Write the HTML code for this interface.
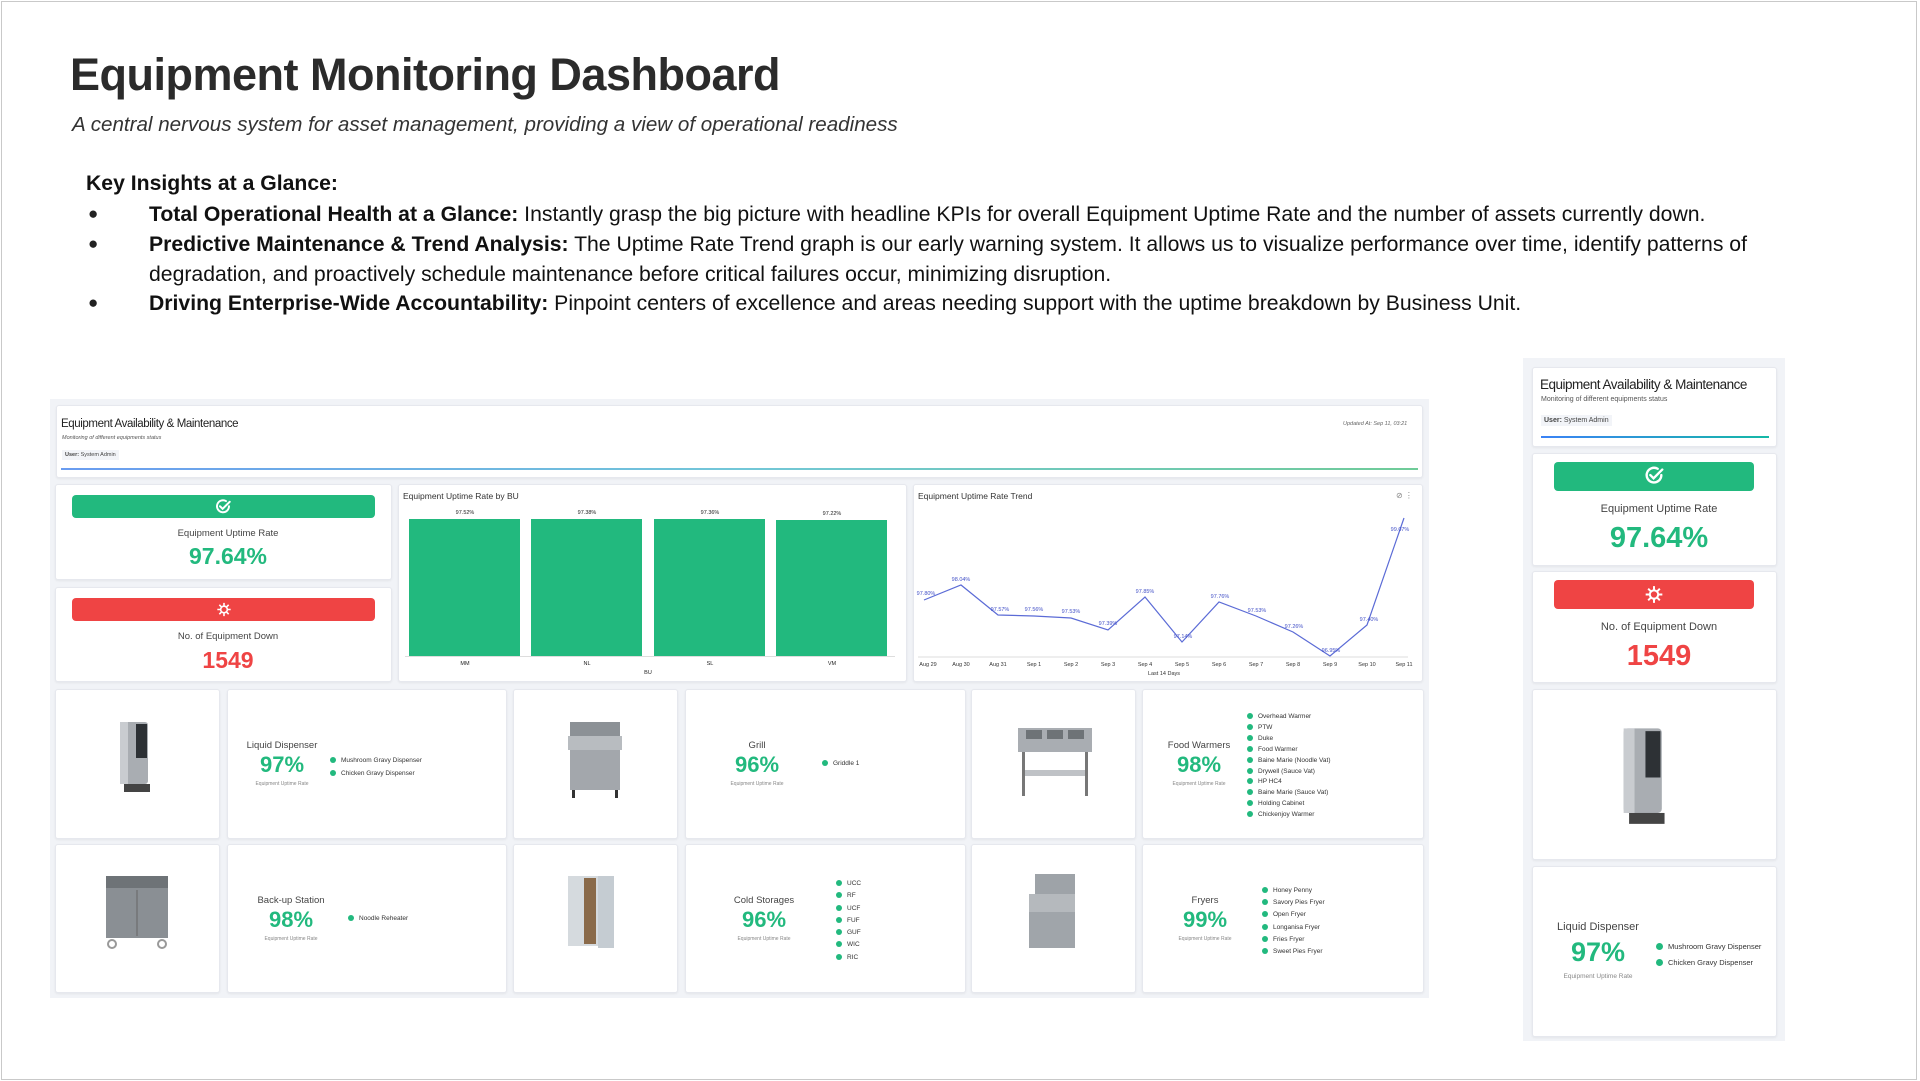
<!DOCTYPE html>
<html><head><meta charset="utf-8"><style>
*{margin:0;padding:0;box-sizing:border-box}
body{width:1920px;height:1081px;background:#fff;font-family:"Liberation Sans",Arial,sans-serif;position:relative;overflow:hidden;color:#222}
.a{position:absolute}
.frame{left:1px;top:1px;width:1916px;height:1079px;border:1px solid #c9c9c9}
h1{position:absolute;left:70px;top:49px;font-size:45px;font-weight:bold;color:#2b2b2b;letter-spacing:-0.5px}
.sub{left:72px;top:113px;font-size:20.6px;font-style:italic;color:#333}
.ki{left:86px;top:172px;font-size:21.2px;font-weight:bold;color:#111}
.bl{left:149px;font-size:21.2px;color:#111;line-height:29.5px;width:1620px}
.dot{left:88px;font-size:17px}
.card{position:absolute;background:#fff;border:1px solid #e6e8ee;border-radius:3px;box-shadow:0 1px 2px rgba(0,0,0,.06)}
.bg{position:absolute;background:#f1f3f7}
.t{position:absolute;white-space:nowrap}
.bar{position:absolute;border-radius:4px}
.c{text-align:center;transform:translateX(-50%)}
.g{color:#22b97e;font-weight:bold}
.r{color:#ef4444;font-weight:bold}
.lg{position:absolute;font-size:6.5px;color:#333;white-space:nowrap}
.lg i{display:inline-block;width:6px;height:6px;border-radius:50%;background:#22b97e;margin-right:5px;vertical-align:-1px}
.gb{position:absolute;background:#22b97e}
</style></head><body>
<div class="a frame"></div>
<h1>Equipment Monitoring Dashboard</h1>
<div class="a sub">A central nervous system for asset management, providing a view of operational readiness</div>
<div class="a ki">Key Insights at a Glance:</div>
<div class="a dot" style="top:204px">●</div>
<div class="a dot" style="top:234px">●</div>
<div class="a dot" style="top:293px">●</div>
<div class="a bl" style="top:200px"><b>Total Operational Health at a Glance:</b> Instantly grasp the big picture with headline KPIs for overall Equipment Uptime Rate and the number of assets currently down.</div>
<div class="a bl" style="top:230px"><b>Predictive Maintenance &amp; Trend Analysis:</b> The Uptime Rate Trend graph is our early warning system. It allows us to visualize performance over time, identify patterns of degradation, and proactively schedule maintenance before critical failures occur, minimizing disruption.</div>
<div class="a bl" style="top:289px"><b>Driving Enterprise-Wide Accountability:</b> Pinpoint centers of excellence and areas needing support with the uptime breakdown by Business Unit.</div>

<!-- main dashboard -->
<div class="bg" style="left:50px;top:399px;width:1379px;height:599px"></div>
<div class="card" style="left:56px;top:405px;width:1367px;height:73px"></div>
<div class="t" style="left:61px;top:418px;font-size:11.5px;color:#222;letter-spacing:-0.4px">Equipment Availability &amp; Maintenance</div>
<div class="t" style="left:62px;top:435px;font-size:5.5px;color:#555;font-style:italic">Monitoring of different equipments status</div>
<div class="t" style="left:62px;top:450px;font-size:5.5px;color:#444;background:#f2f4f8;padding:2px 3px"><b>User:</b> System Admin</div>
<div class="t" style="left:1343px;top:421px;font-size:5.5px;color:#666;font-style:italic">Updated At: Sep 11, 03:21</div>
<div class="a" style="left:61px;top:468px;width:1357px;height:2px;background:linear-gradient(90deg,#6a9cf0,#72c7d8 50%,#6fcb98)"></div>

<div class="card" style="left:55px;top:484px;width:337px;height:96px"></div>
<div class="bar" style="left:72px;top:495px;width:303px;height:23px;background:#22b97e"></div>
<svg class="a" style="left:214px;top:498px" width="18" height="18" viewBox="0 0 24 24" fill="none" stroke="#fff" stroke-width="2.6" stroke-linecap="round"><path d="M20 11a8 8 0 1 1-4-6.9"/><path d="M8 11l3.5 3.5L21 5"/></svg>
<div class="t c" style="left:228px;top:528px;font-size:9.5px;color:#444">Equipment Uptime Rate</div>
<div class="t c g" style="left:228px;top:543px;font-size:23px">97.64%</div>
<div class="card" style="left:55px;top:587px;width:337px;height:95px"></div>
<div class="bar" style="left:72px;top:598px;width:303px;height:23px;background:#ef4444"></div>
<svg class="a" style="left:216px;top:601px" width="16" height="17" viewBox="0 0 24 24" fill="none" stroke="#fff" stroke-width="2.4"><circle cx="12" cy="12" r="5"/><path d="M12 2v4M12 18v4M2 12h4M18 12h4M5 5l3 3M16 16l3 3M19 5l-3 3M8 16l-3 3"/></svg>
<div class="t c" style="left:228px;top:631px;font-size:9.5px;color:#444">No. of Equipment Down</div>
<div class="t c r" style="left:228px;top:647px;font-size:23px">1549</div>

<div class="card" style="left:398px;top:484px;width:509px;height:198px"></div>
<div class="t" style="left:403px;top:491px;font-size:8.5px;color:#333">Equipment Uptime Rate by BU</div>
<div class="gb" style="left:409px;top:519px;width:111px;height:137px"></div>
<div class="gb" style="left:531px;top:519px;width:111px;height:137px"></div>
<div class="gb" style="left:654px;top:519px;width:111px;height:137px"></div>
<div class="gb" style="left:776px;top:520px;width:111px;height:136px"></div>
<div class="a" style="left:405px;top:656px;width:490px;height:1px;background:#ddd"></div>
<div class="t c" style="left:465px;top:510px;font-size:5.5px">97.52%</div>
<div class="t c" style="left:587px;top:510px;font-size:5.5px">97.38%</div>
<div class="t c" style="left:710px;top:510px;font-size:5.5px">97.36%</div>
<div class="t c" style="left:832px;top:511px;font-size:5.5px">97.22%</div>
<div class="t c" style="left:465px;top:661px;font-size:5.5px">MM</div>
<div class="t c" style="left:587px;top:661px;font-size:5.5px">NL</div>
<div class="t c" style="left:710px;top:661px;font-size:5.5px">SL</div>
<div class="t c" style="left:832px;top:661px;font-size:5.5px">VM</div>
<div class="t c" style="left:648px;top:670px;font-size:5.5px">BU</div>

<div class="card" style="left:913px;top:484px;width:510px;height:198px"></div>
<div class="t" style="left:918px;top:491px;font-size:8.5px;color:#333">Equipment Uptime Rate Trend</div>
<div class="t" style="left:1396px;top:491px;font-size:8px;color:#888">⊘ ⋮</div>
<svg class="a" style="left:900px;top:500px" width="520" height="180">
<line x1="18" y1="157" x2="508" y2="157" stroke="#ddd"/>
<polyline fill="none" stroke="#5b6bd6" stroke-width="1.2" points="24,100 61,85 98,115 134,116 171,118 208,130 245,97 282,142 319,102 356,116 393,132 430,156 467,125 504,18"/>
<g font-size="5.5" fill="#4351c7" font-family="Liberation Sans" text-anchor="middle">
<text x="26" y="95">97.80%</text><text x="61" y="81">98.04%</text><text x="100" y="111">97.57%</text><text x="134" y="111">97.56%</text><text x="171" y="113">97.53%</text><text x="208" y="125">97.39%</text><text x="245" y="93">97.85%</text><text x="283" y="138">97.14%</text><text x="320" y="98">97.76%</text><text x="357" y="112">97.53%</text><text x="394" y="128">97.26%</text><text x="431" y="152">96.95%</text><text x="469" y="121">97.40%</text><text x="500" y="31">99.07%</text></g>
<g font-size="5.5" fill="#333" font-family="Liberation Sans" text-anchor="middle">
<text x="28" y="166">Aug 29</text><text x="61" y="166">Aug 30</text><text x="98" y="166">Aug 31</text><text x="134" y="166">Sep 1</text><text x="171" y="166">Sep 2</text><text x="208" y="166">Sep 3</text><text x="245" y="166">Sep 4</text><text x="282" y="166">Sep 5</text><text x="319" y="166">Sep 6</text><text x="356" y="166">Sep 7</text><text x="393" y="166">Sep 8</text><text x="430" y="166">Sep 9</text><text x="467" y="166">Sep 10</text><text x="504" y="166">Sep 11</text><text x="264" y="175">Last 14 Days</text></g>
</svg>

<!-- equipment cards -->
<div class="card" style="left:55px;top:689px;width:165px;height:150px"></div>
<div class="card" style="left:227px;top:689px;width:280px;height:150px"></div>
<div class="card" style="left:513px;top:689px;width:165px;height:150px"></div>
<div class="card" style="left:685px;top:689px;width:281px;height:150px"></div>
<div class="card" style="left:971px;top:689px;width:165px;height:150px"></div>
<div class="card" style="left:1142px;top:689px;width:282px;height:150px"></div>
<div class="card" style="left:55px;top:844px;width:165px;height:149px"></div>
<div class="card" style="left:227px;top:844px;width:280px;height:149px"></div>
<div class="card" style="left:513px;top:844px;width:165px;height:149px"></div>
<div class="card" style="left:685px;top:844px;width:281px;height:149px"></div>
<div class="card" style="left:971px;top:844px;width:165px;height:149px"></div>
<div class="card" style="left:1142px;top:844px;width:282px;height:149px"></div>

<!-- appliance drawings -->
<svg class="a" style="left:110px;top:718px" width="55" height="80" viewBox="0 0 55 80"><rect x="10" y="4" width="28" height="62" rx="3" fill="#a9adb2"/><rect x="26" y="6" width="11" height="34" fill="#2d3135"/><rect x="14" y="66" width="26" height="8" fill="#444"/><rect x="10" y="4" width="8" height="62" fill="#c9ccd0"/></svg>
<svg class="a" style="left:560px;top:718px" width="70" height="82" viewBox="0 0 70 82"><rect x="10" y="4" width="50" height="14" fill="#8c9196"/><rect x="8" y="18" width="54" height="14" fill="#b8bcc0"/><rect x="10" y="32" width="50" height="40" fill="#a3a7ac"/><rect x="12" y="72" width="3" height="8" fill="#333"/><rect x="55" y="72" width="3" height="8" fill="#333"/></svg>
<svg class="a" style="left:1010px;top:718px" width="90" height="80" viewBox="0 0 90 80"><rect x="8" y="10" width="74" height="24" fill="#a9adb2"/><rect x="16" y="12" width="16" height="9" fill="#6e7377"/><rect x="37" y="12" width="16" height="9" fill="#6e7377"/><rect x="58" y="12" width="16" height="9" fill="#6e7377"/><rect x="12" y="52" width="66" height="6" fill="#bfc2c6"/><rect x="12" y="34" width="3" height="44" fill="#777"/><rect x="75" y="34" width="3" height="44" fill="#777"/></svg>
<svg class="a" style="left:100px;top:870px" width="75" height="80" viewBox="0 0 75 80"><rect x="6" y="6" width="62" height="12" fill="#6e7377"/><rect x="6" y="18" width="62" height="50" fill="#8a8f94"/><line x1="37" y1="20" x2="37" y2="66" stroke="#666"/><circle cx="12" cy="74" r="4" fill="none" stroke="#999" stroke-width="2"/><circle cx="62" cy="74" r="4" fill="none" stroke="#999" stroke-width="2"/></svg>
<svg class="a" style="left:560px;top:872px" width="70" height="80" viewBox="0 0 70 80"><rect x="8" y="4" width="30" height="70" fill="#d5dade"/><rect x="24" y="6" width="12" height="66" fill="#8a6a4a"/><rect x="38" y="4" width="16" height="72" fill="#c5ccd2"/></svg>
<svg class="a" style="left:1015px;top:870px" width="75" height="82" viewBox="0 0 75 82"><rect x="20" y="4" width="40" height="24" fill="#9ea3a8"/><rect x="14" y="24" width="46" height="18" fill="#b5b9bd"/><rect x="14" y="42" width="46" height="36" fill="#a0a5aa"/></svg>

<!-- text blocks -->
<div class="t c" style="left:282px;top:740px;font-size:9.5px;color:#444">Liquid Dispenser</div>
<div class="t c g" style="left:282px;top:752px;font-size:22px">97%</div>
<div class="t c" style="left:282px;top:781px;font-size:5px;color:#888">Equipment Uptime Rate</div>
<div class="lg" style="left:330px;top:754px;line-height:13px"><i></i>Mushroom Gravy Dispenser<br><i></i>Chicken Gravy Dispenser</div>

<div class="t c" style="left:757px;top:740px;font-size:9.5px;color:#444">Grill</div>
<div class="t c g" style="left:757px;top:752px;font-size:22px">96%</div>
<div class="t c" style="left:757px;top:781px;font-size:5px;color:#888">Equipment Uptime Rate</div>
<div class="lg" style="left:822px;top:760px"><i></i>Griddle 1</div>

<div class="t c" style="left:1199px;top:740px;font-size:9.5px;color:#444">Food Warmers</div>
<div class="t c g" style="left:1199px;top:752px;font-size:22px">98%</div>
<div class="t c" style="left:1199px;top:781px;font-size:5px;color:#888">Equipment Uptime Rate</div>
<div class="lg" style="left:1247px;top:712px;line-height:10.9px"><i></i>Overhead Warmer<br><i></i>PTW<br><i></i>Duke<br><i></i>Food Warmer<br><i></i>Baine Marie (Noodle Vat)<br><i></i>Drywell (Sauce Vat)<br><i></i>HP HC4<br><i></i>Baine Marie (Sauce Vat)<br><i></i>Holding Cabinet<br><i></i>Chickenjoy Warmer</div>

<div class="t c" style="left:291px;top:895px;font-size:9.5px;color:#444">Back-up Station</div>
<div class="t c g" style="left:291px;top:907px;font-size:22px">98%</div>
<div class="t c" style="left:291px;top:936px;font-size:5px;color:#888">Equipment Uptime Rate</div>
<div class="lg" style="left:348px;top:915px"><i></i>Noodle Reheater</div>

<div class="t c" style="left:764px;top:895px;font-size:9.5px;color:#444">Cold Storages</div>
<div class="t c g" style="left:764px;top:907px;font-size:22px">96%</div>
<div class="t c" style="left:764px;top:936px;font-size:5px;color:#888">Equipment Uptime Rate</div>
<div class="lg" style="left:836px;top:878px;line-height:12.3px"><i></i>UCC<br><i></i>RF<br><i></i>UCF<br><i></i>FUF<br><i></i>GUF<br><i></i>WIC<br><i></i>RIC</div>

<div class="t c" style="left:1205px;top:895px;font-size:9.5px;color:#444">Fryers</div>
<div class="t c g" style="left:1205px;top:907px;font-size:22px">99%</div>
<div class="t c" style="left:1205px;top:936px;font-size:5px;color:#888">Equipment Uptime Rate</div>
<div class="lg" style="left:1262px;top:885px;line-height:12.2px"><i></i>Honey Penny<br><i></i>Savory Pies Fryer<br><i></i>Open Fryer<br><i></i>Longanisa Fryer<br><i></i>Fries Fryer<br><i></i>Sweet Pies Fryer</div>

<!-- right panel -->
<div class="bg" style="left:1523px;top:358px;width:262px;height:683px"></div>
<div class="card" style="left:1532px;top:367px;width:245px;height:80px"></div>
<div class="t" style="left:1540px;top:377px;font-size:13.5px;color:#222;letter-spacing:-0.5px">Equipment Availability &amp; Maintenance</div>
<div class="t" style="left:1541px;top:396px;font-size:7px;color:#555">Monitoring of different equipments status</div>
<div class="t" style="left:1541px;top:415px;font-size:7px;color:#444;background:#f2f4f8;padding:2px 3px"><b>User:</b> System Admin</div>
<div class="a" style="left:1541px;top:436px;width:228px;height:2px;background:linear-gradient(90deg,#3b82f6,#14b8a6)"></div>

<div class="card" style="left:1532px;top:453px;width:245px;height:113px"></div>
<div class="bar" style="left:1554px;top:462px;width:200px;height:29px;background:#22b97e"></div>
<svg class="a" style="left:1643px;top:465px" width="22" height="22" viewBox="0 0 24 24" fill="none" stroke="#fff" stroke-width="2.6" stroke-linecap="round"><path d="M20 11a8 8 0 1 1-4-6.9"/><path d="M8 11l3.5 3.5L21 5"/></svg>
<div class="t c" style="left:1659px;top:503px;font-size:11px;color:#444">Equipment Uptime Rate</div>
<div class="t c g" style="left:1659px;top:522px;font-size:29px">97.64%</div>
<div class="card" style="left:1532px;top:571px;width:245px;height:112px"></div>
<div class="bar" style="left:1554px;top:580px;width:200px;height:29px;background:#ef4444"></div>
<svg class="a" style="left:1644px;top:584px" width="20" height="21" viewBox="0 0 24 24" fill="none" stroke="#fff" stroke-width="2.4"><circle cx="12" cy="12" r="5"/><path d="M12 2v4M12 18v4M2 12h4M18 12h4M5 5l3 3M16 16l3 3M19 5l-3 3M8 16l-3 3"/></svg>
<div class="t c" style="left:1659px;top:621px;font-size:11px;color:#444">No. of Equipment Down</div>
<div class="t c r" style="left:1659px;top:640px;font-size:29px">1549</div>
<div class="card" style="left:1532px;top:689px;width:245px;height:171px"></div>
<svg class="a" style="left:1610px;top:720px" width="75" height="115" viewBox="0 0 55 80"><rect x="10" y="4" width="28" height="62" rx="3" fill="#a9adb2"/><rect x="26" y="6" width="11" height="34" fill="#2d3135"/><rect x="14" y="66" width="26" height="8" fill="#444"/><rect x="10" y="4" width="8" height="62" fill="#c9ccd0"/></svg>
<div class="card" style="left:1532px;top:866px;width:245px;height:171px"></div>
<div class="t c" style="left:1598px;top:921px;font-size:11px;color:#444">Liquid Dispenser</div>
<div class="t c g" style="left:1598px;top:937px;font-size:27px">97%</div>
<div class="t c" style="left:1598px;top:973px;font-size:6.5px;color:#888">Equipment Uptime Rate</div>
<div class="lg" style="left:1656px;top:939px;line-height:16px;font-size:7.5px"><i style="width:7px;height:7px"></i>Mushroom Gravy Dispenser<br><i style="width:7px;height:7px"></i>Chicken Gravy Dispenser</div>
</body></html>
